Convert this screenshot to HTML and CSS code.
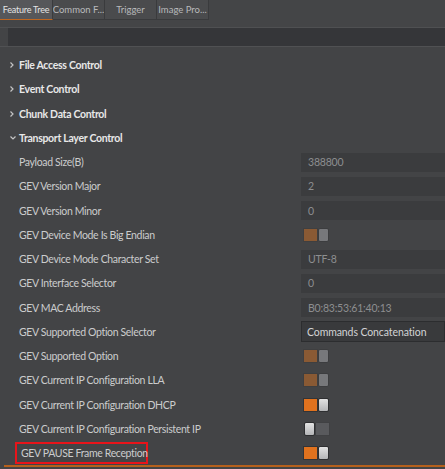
FILE: index.html
```html
<!DOCTYPE html>
<html>
<head>
<meta charset="utf-8">
<link rel="stylesheet" href="styles.css">
</head>
<body>
<div class="panel">
  <div class="tabs">
    <div class="tab active">Feature Tree</div>
    <div class="tab">Common F...</div>
    <div class="tab">Trigger</div>
    <div class="tab">Image Pro...</div>
  </div>
  <div class="searchwrap"><div class="search"></div></div>
  <div class="tree">
    <div class="row group"><span class="chev"><svg width="6" height="8" viewBox="0 0 6 8"><path d="M1.5 1.5 L4 4 L1.5 6.5" fill="none" stroke="#c4c4c4" stroke-width="1.2"/></svg></span>File Access Control</div>
    <div class="row group"><span class="chev"><svg width="6" height="8" viewBox="0 0 6 8"><path d="M1.5 1.5 L4 4 L1.5 6.5" fill="none" stroke="#c4c4c4" stroke-width="1.2"/></svg></span>Event Control</div>
    <div class="row group"><span class="chev"><svg width="6" height="8" viewBox="0 0 6 8"><path d="M1.5 1.5 L4 4 L1.5 6.5" fill="none" stroke="#c4c4c4" stroke-width="1.2"/></svg></span>Chunk Data Control</div>
    <div class="row group"><span class="chev"><svg width="8" height="6" viewBox="0 0 8 6"><path d="M1.5 1.5 L4 4 L6.5 1.5" fill="none" stroke="#c4c4c4" stroke-width="1.2"/></svg></span>Transport Layer Control</div>
    <div class="row"><span class="label">Payload Size(B)</span><div class="value"><div class="field">388800</div></div></div>
    <div class="row"><span class="label">GEV Version Major</span><div class="value"><div class="field">2</div></div></div>
    <div class="row"><span class="label">GEV Version Minor</span><div class="value"><div class="field">0</div></div></div>
    <div class="row"><span class="label">GEV Device Mode Is Big Endian</span><div class="value"><div class="toggle on dis"><i></i><b></b></div></div></div>
    <div class="row"><span class="label">GEV Device Mode Character Set</span><div class="value"><div class="field">UTF-8</div></div></div>
    <div class="row"><span class="label">GEV Interface Selector</span><div class="value"><div class="field">0</div></div></div>
    <div class="row"><span class="label">GEV MAC Address</span><div class="value"><div class="field">B0:83:53:61:40:13</div></div></div>
    <div class="row"><span class="label">GEV Supported Option Selector</span><div class="value"><div class="field combo">Commands Concatenation</div></div></div>
    <div class="row"><span class="label">GEV Supported Option</span><div class="value"><div class="toggle on dis"><i></i><b></b></div></div></div>
    <div class="row"><span class="label">GEV Current IP Configuration LLA</span><div class="value"><div class="toggle on dis"><i></i><b></b></div></div></div>
    <div class="row"><span class="label">GEV Current IP Configuration DHCP</span><div class="value"><div class="toggle on"><i></i><b></b></div></div></div>
    <div class="row"><span class="label">GEV Current IP Configuration Persistent IP</span><div class="value"><div class="toggle off"><b></b><i></i></div></div></div>
    <div class="row selected"><span class="label boxed">GEV PAUSE Frame Reception</span><div class="value"><div class="toggle on"><i></i><b></b></div></div></div>
  </div>
</div>
</body>
</html>
```
FILE: styles.css
```css
html, body {
  margin: 0;
  padding: 0;
  background: #434446;
}
body {
  width: 445px;
  height: 469px;
  overflow: hidden;
  font-family: Lato, "Open Sans", sans-serif;
}
.panel {
  display: flex;
  flex-direction: column;
}
.tabs {
  display: flex;
  height: 28px;
  border-bottom: 1px solid #4f5052;
  box-sizing: border-box;
  background: #444547;
}
.tab {
  width: 52px;
  height: 20px;
  box-sizing: border-box;
  display: flex;
  align-items: center;
  justify-content: center;
  font-size: 9.5px;
  color: #b8b9bb;
  background: #4a4b4d;
  border-right: 1px solid #3a3b3d;
  border-bottom: 1px solid #3a3b3d;
  white-space: nowrap;
  overflow: hidden;
}
.tab.active {
  width: 53px;
  background: #56575a;
  color: #e4e4e4;
  border-bottom: 1px solid #c0661e;
  font-size: 9px;
  letter-spacing: -0.2px;
}
.searchwrap {
  padding-left: 8px;
  border-bottom: 1px solid #505153;
}
.search {
  height: 18px;
  background: #353639;
}
.tree {
  padding-top: 6px;
  display: flex;
  flex-direction: column;
}
.row {
  height: 24.25px;
  display: flex;
  align-items: center;
  position: relative;
  font-size: 10.5px;
  letter-spacing: -0.35px;
  color: #cbcccd;
  padding-left: 19px;
  box-sizing: border-box;
}
.row.group {
  font-weight: bold;
  color: #e8e8e8;
  padding-left: 0;
  letter-spacing: -0.3px;
}
.chev {
  width: 19px;
  flex: none;
  display: flex;
  align-items: center;
  padding-left: 9px;
  box-sizing: border-box;
}
.chev svg {
  display: block;
}
.label {
  width: 282px;
  flex: none;
  white-space: nowrap;
}
.value {
  flex: 1;
  display: flex;
  align-items: center;
  letter-spacing: 0;
}
.field {
  width: 100%;
  height: 19px;
  background: #3b3c3e;
  color: #8d8e90;
  display: flex;
  align-items: center;
  padding-left: 7px;
  box-sizing: border-box;
  font-size: 10.5px;
  letter-spacing: -0.2px;
}
.field.combo {
  background: #393a3c;
  border: 1px solid #2c2d2f;
  height: 21px;
  color: #d2d3d5;
  font-size: 10.5px;
  letter-spacing: -0.1px;
  padding-left: 5px;
}
.toggle {
  display: flex;
  height: 14px;
  margin-left: 2px;
}
.toggle i {
  width: 15px;
  height: 14px;
  display: block;
  flex: none;
}
.toggle b {
  width: 11px;
  height: 14px;
  display: block;
  flex: none;
  border-radius: 2px;
  box-sizing: border-box;
  border: 1px solid #2e2f31;
  background: linear-gradient(#e2e2e2, #b4b5b7);
}
.toggle.on i {
  background: #e0721e;
  border: 1px solid #333436;
  box-sizing: border-box;
}
.toggle.on.dis i {
  background: #8a5a34;
  border-color: #3f3f40;
}
.toggle.dis b {
  background: #77787b;
  border-color: #3c3d3f;
}
.toggle.off i {
  background: #595a5d;
  border: 1px solid #404143;
  box-sizing: border-box;
  width: 15px;
}
.toggle.off {
  margin-left: 3px;
}
.row.selected::after {
  content: "";
  position: absolute;
  left: 4px;
  right: 0;
  bottom: -2px;
  height: 2px;
  background: #b5601c;
}
.label.boxed {
  margin-left: -4px;
  padding: 3px 4px;
  border: 2px solid #e8141a;
  margin-right: 153px;
  box-sizing: border-box;
  width: 133px;
}
```
